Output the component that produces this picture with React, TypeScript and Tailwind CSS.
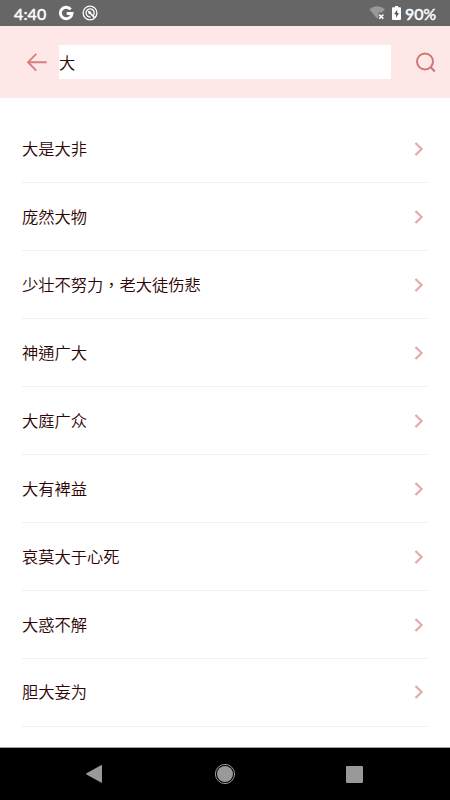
import React from "react";

const idioms: string[] = [
  "大是大非",
  "庞然大物",
  "少壮不努力，老大徒伤悲",
  "神通广大",
  "大庭广众",
  "大有裨益",
  "哀莫大于心死",
  "大惑不解",
  "胆大妄为",
];

function StatusBar() {
  return (
    <div className="flex h-[26px] shrink-0 items-center bg-[#666666] pr-[13px] pl-[14px] text-white">
      <span className="w-[44px] pt-px font-['Lato',sans-serif] text-[16px] leading-[25px] font-medium tracking-[0.1px] [-webkit-text-stroke:0.35px_white]">4:40</span>
      <svg width="17" height="16" viewBox="0 0 17 16" fill="none" className="shrink-0">
        <path d="M12.7 4.3A5.8 5.8 0 1 0 14 8.5H8.7" stroke="white" strokeWidth="2.9" />
      </svg>
      <svg width="16" height="16" viewBox="0 0 16 16" fill="none" className="ml-[7px] shrink-0">
        <circle cx="8" cy="8" r="6.9" stroke="white" strokeWidth="1.3" />
        <path d="M11.2 10.6A4.1 4.1 0 1 0 8.6 12" stroke="white" strokeWidth="1.3" />
        <path d="M7 7L12.6 12.6" stroke="white" strokeWidth="1.5" />
        <path d="M5.6 5.6L9.6 7L7 9.6Z" fill="white" />
      </svg>
      <div className="flex-1" />
      <svg width="17" height="16" viewBox="0 0 17 16" className="shrink-0">
        <path d="M0.3 4.2Q8.2-1.6 16 4.2L13 7.6H9.4V12.6L8.2 13.8Z" fill="#999999" />
        <path d="M10.2 9.6L14.4 13.8M14.4 9.6L10.2 13.8" stroke="white" strokeWidth="1.6" />
      </svg>
      <svg width="9" height="14" viewBox="0 0 9 14" className="ml-[6px] shrink-0">
        <path d="M3 0H6V1.3H8Q9 1.3 9 2.3V13Q9 14 8 14H1Q0 14 0 13V2.3Q0 1.3 1 1.3H3Z" fill="white" />
        <path d="M5.2 3.7L2 8.3H4.1V11.7L7 7H5.2Z" fill="#555555" />
      </svg>
      <span className="ml-[4px] w-[32px] pt-px font-['Lato',sans-serif] text-[16px] leading-[25px] font-medium tracking-[-0.1px] whitespace-nowrap [-webkit-text-stroke:0.35px_white]">90%</span>
    </div>
  );
}

function SearchHeader() {
  return (
    <header className="flex h-[72px] shrink-0 items-center bg-[#fee8e7] pl-[26px]">
      <svg width="22" height="20" viewBox="0 0 22 20" fill="none" stroke="#d67f7c" strokeWidth="1.9" className="shrink-0">
        <path d="M20.7 10.2H2M10.3 1.8L2 10.2L10.3 18.6" />
      </svg>
      <div className="ml-[11px] h-[34px] w-[332px] bg-white text-[16.2px] leading-[35px] font-[350] text-[#2e0404]">大</div>
      <svg width="22" height="22" viewBox="0 0 22 22" fill="none" stroke="#ce7774" strokeWidth="2" className="ml-[24px] shrink-0">
        <circle cx="10" cy="10.5" r="8" />
        <path d="M15.5 16L19.7 20.5" />
      </svg>
    </header>
  );
}

function IdiomRow({ text }: { text: string }) {
  return (
    <li className="flex h-[67.94px] items-center justify-between border-b-[1.5px] border-[#f0f0f0] pr-[4px]">
      <span className="pb-[2px] text-[16.25px] leading-[24px] font-[350] text-[#2e0404]">{text}</span>
      <svg width="10" height="14" viewBox="0 0 10 14" fill="none" stroke="#e2aaa8" strokeWidth="2.2" className="shrink-0">
        <path d="M1.5 1L7.6 7L1.5 13" />
      </svg>
    </li>
  );
}

function NavigationBar() {
  return (
    <nav className="flex h-[53px] shrink-0 items-center justify-between border-t border-[#a0a0a0] bg-black pr-[87px] pl-[85px]">
      <svg width="18" height="20" viewBox="0 0 18 20" fill="#999999">
        <path d="M16 1.2Q17 0.7 17 1.7V18Q17 19 16 18.4L1.5 10.5Q0.5 10 1.5 9.3Z" />
      </svg>
      <svg width="22" height="22" viewBox="0 0 22 22" fill="none">
        <circle cx="11" cy="11" r="9.6" stroke="#999999" strokeWidth="1" />
        <circle cx="11" cy="11" r="8" fill="#999999" />
      </svg>
      <div className="size-[17px] rounded-[1px] bg-[#999999]" />
    </nav>
  );
}

export default function App() {
  return (
    <div className="flex h-[800px] w-[450px] flex-col overflow-hidden bg-white font-['Noto_Sans_CJK_TC',sans-serif]">
      <StatusBar />
      <SearchHeader />
      <ul className="min-h-0 flex-1 px-[22px] pt-[17.5px]">
        {idioms.map((text) => (
          <IdiomRow key={text} text={text} />
        ))}
      </ul>
      <NavigationBar />
    </div>
  );
}
